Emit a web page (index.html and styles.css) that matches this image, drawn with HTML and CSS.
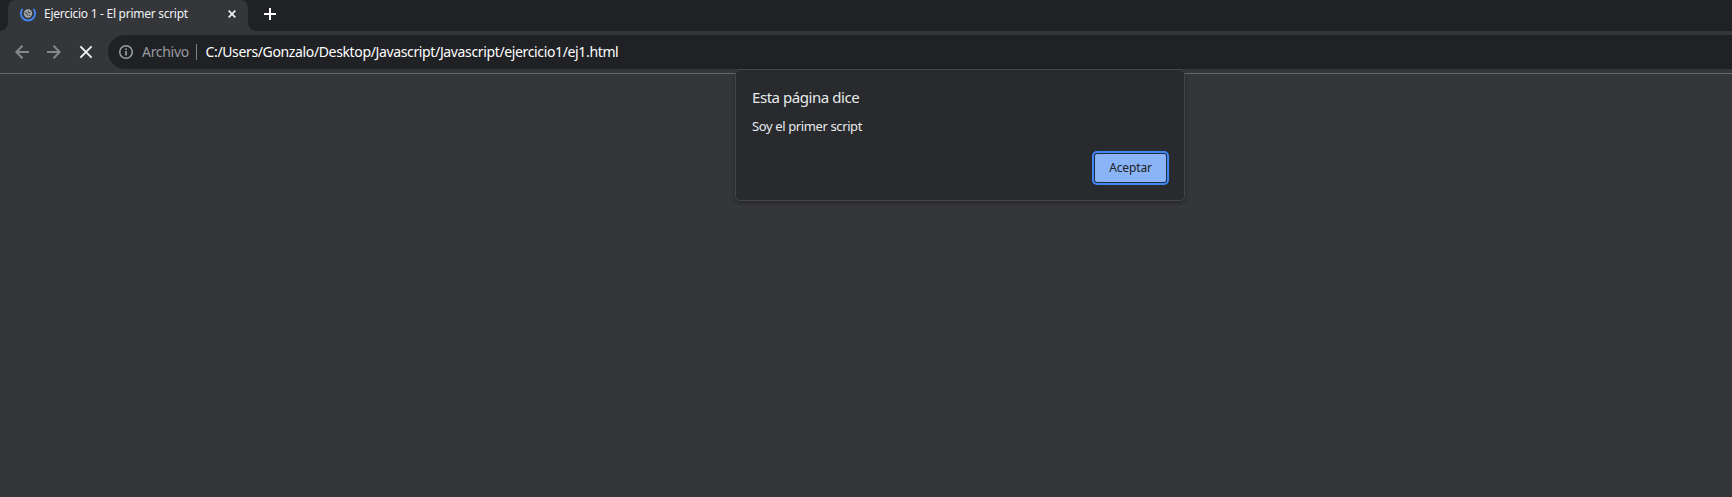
FILE: index.html
```html
<!DOCTYPE html>
<html lang="es">
<head>
<meta charset="utf-8">
<title>Ejercicio 1 - El primer script</title>
<link rel="stylesheet" href="styles.css">
</head>
<body>
<header class="tabstrip">
  <div class="tab">
    <svg class="favicon" width="16" height="16" viewBox="0 0 16 16">
      <path d="M2.6 2.8A7.1 7.1 0 1 0 13.4 2.8" fill="none" stroke="#4285f4" stroke-width="1.9"/>
      <circle cx="8" cy="7.5" r="4.2" fill="#a4a6a9"/>
      <path d="M4.6 6.6l2.3 1 .7 1.9M8 4.9l.4 1.3 2.2.5M8.6 9.6l1.6-.7" fill="none" stroke="#45474b" stroke-width="1.1"/>
    </svg>
    <span class="tab-title">Ejercicio 1 - El primer script</span>
    <svg class="tab-close" width="8" height="8" viewBox="0 0 8 8"><path d="M.7.7l6.6 6.6M7.3.7L.7 7.3" stroke="#f1f3f4" stroke-width="1.7"/></svg>
  </div>
  <svg class="new-tab" width="12" height="12" viewBox="0 0 12 12"><path d="M6 0v12M0 6h12" stroke="#fff" stroke-width="2"/></svg>
</header>
<nav class="toolbar">
  <svg class="nav-icon" width="14" height="14" viewBox="0 0 14 14"><path d="M14 7H1.4M7.5.8L1.3 7l6.2 6.2" fill="none" stroke="#86888b" stroke-width="2"/></svg>
  <svg class="nav-icon" width="14" height="14" viewBox="0 0 14 14"><path d="M0 7h12.6M6.5.8L12.7 7l-6.2 6.2" fill="none" stroke="#86888b" stroke-width="2"/></svg>
  <svg class="nav-icon" width="14" height="14" viewBox="0 0 14 14"><path d="M1.4 1.4l11.2 11.2M12.6 1.4L1.4 12.6" stroke="#f1f3f4" stroke-width="1.9"/></svg>
  <div class="omnibox">
    <svg class="info" width="14" height="14" viewBox="0 0 14 14"><circle cx="7" cy="7" r="6.25" fill="none" stroke="#9aa0a6" stroke-width="1.5"/><path d="M7 6v4.6M7 3.4v1.6" stroke="#9aa0a6" stroke-width="1.7"/></svg>
    <span class="scheme">Archivo</span>
    <span class="divider"></span>
    <span class="url">C:/Users/Gonzalo/Desktop/Javascript/Javascript/ejercicio1/ej1.html</span>
  </div>
</nav>
<main class="page"></main>
<section class="dialog" role="alertdialog">
  <h1 class="dialog-title">Esta página dice</h1>
  <p class="dialog-text">Soy el primer script</p>
  <button class="accept">Aceptar</button>
</section>
</body>
</html>
```
FILE: styles.css
```css
* { box-sizing: border-box; }
body {
  margin: 0;
  height: 497px;
  overflow: hidden;
  display: flex;
  flex-direction: column;
  background: #35363a;
  font-family: "Segoe UI", "Noto Sans", "Open Sans", sans-serif;
}
.tabstrip {
  display: flex;
  height: 31px;
  flex: none;
  padding-left: 8px;
  background: #202124;
}
.tab {
  position: relative;
  display: flex;
  align-items: center;
  width: 240px;
  height: 31px;
  padding: 0 12px 3px;
  background: #35363a;
  border-radius: 8px 8px 0 0;
}
.tab::before,
.tab::after {
  content: "";
  position: absolute;
  bottom: 0;
  width: 8px;
  height: 8px;
}
.tab::before { left: -8px; background: radial-gradient(circle at 0 0, #202124 7.5px, #35363a 8px); }
.tab::after { right: -8px; background: radial-gradient(circle at 100% 0, #202124 7.5px, #35363a 8px); }
.tab-title {
  margin-left: 8px;
  flex: 1;
  color: #f1f3f4;
  font-size: 12px;
  line-height: 16px;
  white-space: nowrap;
  letter-spacing: -0.27px;
}
.new-tab { margin: 8px 0 0 16px; }
.toolbar {
  display: flex;
  align-items: center;
  flex: none;
  height: 43px;
  padding-left: 15px;
  border-bottom: 1px solid #66676a;
}
.nav-icon { margin-right: 18px; flex: none; }
.omnibox {
  display: flex;
  align-items: center;
  flex: 1;
  height: 34px;
  margin-left: -3px;
  padding-left: 11px;
  border-radius: 17px 0 0 17px;
  background: #202124;
  font-size: 14px;
  line-height: 20px;
  white-space: nowrap;
}
.scheme { width: 46px; margin-left: 9px; color: #969ba1; letter-spacing: -0.3px; }
.divider { width: 1px; height: 16px; margin: 0 8.5px 0 8px; background: #7e8286; }
.url { color: #fff; letter-spacing: -0.36px; }
.page { flex: 1; }
.dialog {
  position: absolute;
  left: 735px;
  top: 69px;
  width: 450px;
  height: 132px;
  display: flex;
  flex-direction: column;
  padding: 17px 18px 18px 16px;
  background: #292a2d;
  border: 1px solid #45464a;
  border-radius: 5px;
  box-shadow: 0 2px 4px rgba(0, 0, 0, .3);
  color: #e8eaed;
}
.dialog-title { margin: 0; font-weight: 400; font-size: 15px; line-height: 20px; letter-spacing: -0.44px; }
.dialog-text { margin: 10px 0 0; font-size: 13px; line-height: 18px; letter-spacing: -0.38px; }
.accept {
  align-self: flex-end;
  width: 71px;
  height: 28px;
  margin-top: auto;
  padding: 0;
  border: 0;
  border-radius: 2px;
  background: #8ab4f8;
  box-shadow: 0 0 0 1px #202b40, 0 0 0 3px #4285f4;
  color: #202124;
  font: 12px/28px "Segoe UI", "Noto Sans", "Open Sans", sans-serif;
  letter-spacing: -0.15px;
}
```
